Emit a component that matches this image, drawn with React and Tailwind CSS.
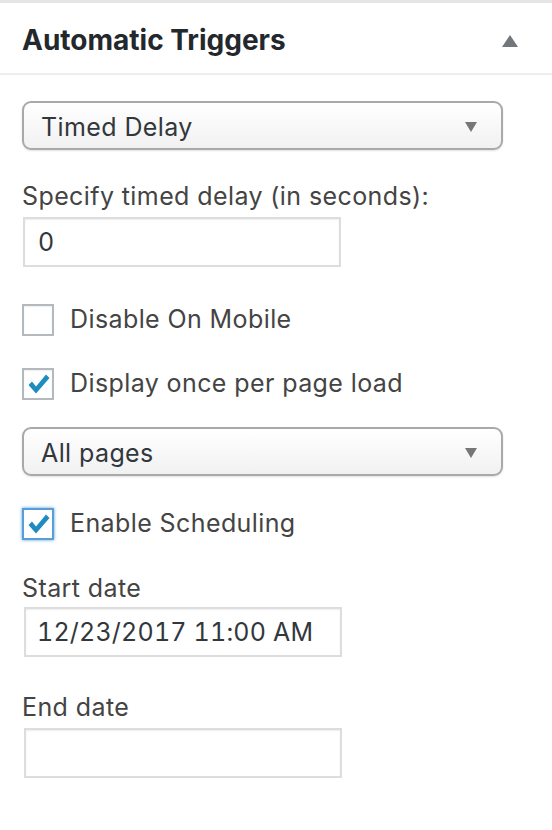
import React from 'react'

const font = { fontFamily: 'Inter, "Liberation Sans", Arial, sans-serif' }

function Select({ value }) {
  return (
    <div className="relative flex items-center w-[481px] h-[49px] rounded-[9px] border-2 border-[#a9a9a9] bg-gradient-to-b from-white to-[#f1f1f1] shadow-[0_1px_2px_rgba(0,0,0,0.12)] pl-[17px] pt-[3px]">
      <span className="text-[25px] leading-[30px] tracking-[0.4px] text-[#32373c]">{value}</span>
      <svg className="absolute right-[24px] top-[19px]" width="12" height="10" viewBox="0 0 12 10">
        <path d="M0 0 L12 0 L6 10 Z" fill="#777" />
      </svg>
    </div>
  )
}

function Checkbox({ checked, focused, label }) {
  return (
    <div className="flex items-center gap-[16px]">
      <div
        className={
          'relative shrink-0 w-[32px] h-[32px] border-2 bg-white ' +
          (focused
            ? 'border-[#5b9dd9] shadow-[0_0_3px_rgba(30,140,190,0.8)]'
            : 'border-[#b4b9be] shadow-[inset_0_1px_2px_rgba(0,0,0,0.07)]')
        }
      >
        {checked && (
          <svg className="absolute left-[3px] top-[4px]" width="24" height="22" viewBox="0 0 24 22">
            <path d="M1.5 11 L5 7.5 L9 12.5 L19 0.5 L22.5 4 L9 19.5 Z" fill="#1e8cbe" />
          </svg>
        )}
      </div>
      <span className="text-[25px] leading-[32px] tracking-[0.4px] text-[#444] -mt-[3px]">{label}</span>
    </div>
  )
}

function TextInput({ value, className = '' }) {
  return (
    <div className={'flex items-center w-[318px] h-[50px] border-2 border-[#ddd] bg-white shadow-[inset_0_1px_2px_rgba(0,0,0,0.07)] ' + className}>
      <span className="text-[25px] leading-[30px] tracking-[0.2px] tabular-nums text-[#32373c]">{value}</span>
    </div>
  )
}

export default function App() {
  return (
    <div className="w-[552px] min-h-[830px] bg-white" style={font}>
      <div className="h-[3px] bg-[#e5e5e5]" />
      {/* Header */}
      <div className="relative flex items-center h-[72px] pl-[22px] border-b-2 border-[#eee]">
        <h2 className="text-[28px] leading-[34px] font-bold text-[#23282d] pt-[3px]">Automatic Triggers</h2>
        <svg className="absolute right-[34px] top-[32px]" width="16" height="12" viewBox="0 0 16 12">
          <path d="M0 12 L16 12 L8 0 Z" fill="#72777c" />
        </svg>
      </div>

      <div className="flex flex-col pl-[22px] pt-[26px]">
        <Select value="Timed Delay" />

        <label className="mt-[31px] text-[25px] tracking-[0.4px] leading-[30px] text-[#444]">Specify timed delay (in seconds):</label>
        <TextInput value="0" className="mt-[6px] ml-[1px] pl-[13px]" />

        <div className="mt-[37px]">
          <Checkbox label="Disable On Mobile" />
        </div>
        <div className="mt-[32px]">
          <Checkbox checked label="Display once per page load" />
        </div>

        <div className="mt-[27px]">
          <Select value="All pages" />
        </div>

        <div className="mt-[32px]">
          <Checkbox checked focused label="Enable Scheduling" />
        </div>

        <label className="mt-[33px] text-[25px] tracking-[0.4px] leading-[30px] text-[#444]">Start date</label>
        <TextInput value="12/23/2017 11:00 AM" className="mt-[4px] ml-[2px] pl-[11px] w-[317px]" />

        <label className="mt-[35px] text-[25px] tracking-[0.4px] leading-[30px] text-[#444]">End date</label>
        <TextInput value="" className="mt-[6px] ml-[2px] w-[317px]" />
      </div>
    </div>
  )
}
